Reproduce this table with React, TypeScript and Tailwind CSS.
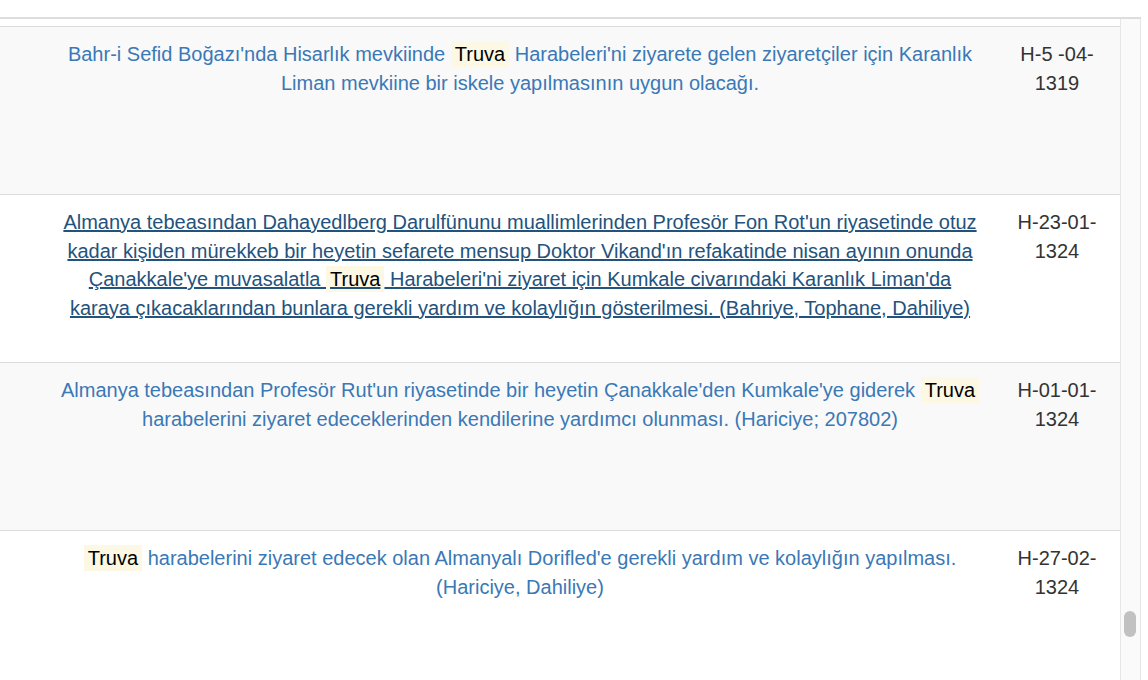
import React from 'react';

// 一行分のテキスト（Truva 部分はハイライト）
type Segment = { text: string; mark?: boolean };

interface ResultRow {
  lines: Segment[][];
  date: [string, string];
  visited?: boolean;
}

const rows: ResultRow[] = [
  {
    lines: [
      [
        { text: "Bahr-i Sefid Boğazı'nda Hisarlık mevkiinde " },
        { text: 'Truva', mark: true },
        { text: " Harabeleri'ni ziyarete gelen ziyaretçiler için Karanlık" },
      ],
      [{ text: 'Liman mevkiine bir iskele yapılmasının uygun olacağı.' }],
    ],
    date: ['H-5 -04-', '1319'],
  },
  {
    visited: true,
    lines: [
      [
        {
          text: "Almanya tebeasından Dahayedlberg Darulfünunu muallimlerinden Profesör Fon Rot'un riyasetinde otuz",
        },
      ],
      [
        {
          text: "kadar kişiden mürekkeb bir heyetin sefarete mensup Doktor Vikand'ın refakatinde nisan ayının onunda",
        },
      ],
      [
        { text: "Çanakkale'ye muvasalatla " },
        { text: 'Truva', mark: true },
        { text: " Harabeleri'ni ziyaret için Kumkale civarındaki Karanlık Liman'da" },
      ],
      [
        {
          text: 'karaya çıkacaklarından bunlara gerekli yardım ve kolaylığın gösterilmesi. (Bahriye, Tophane, Dahiliye)',
        },
      ],
    ],
    date: ['H-23-01-', '1324'],
  },
  {
    lines: [
      [
        {
          text: "Almanya tebeasından Profesör Rut'un riyasetinde bir heyetin Çanakkale'den Kumkale'ye giderek ",
        },
        { text: 'Truva', mark: true },
      ],
      [
        {
          text: 'harabelerini ziyaret edeceklerinden kendilerine yardımcı olunması. (Hariciye; 207802)',
        },
      ],
    ],
    date: ['H-01-01-', '1324'],
  },
  {
    lines: [
      [
        { text: 'Truva', mark: true },
        {
          text: " harabelerini ziyaret edecek olan Almanyalı Dorifled'e gerekli yardım ve kolaylığın yapılması.",
        },
      ],
      [{ text: '(Hariciye, Dahiliye)' }],
    ],
    date: ['H-27-02-', '1324'],
  },
];

export default function App() {
  return (
    <div className="h-[680px] w-[1148px] overflow-hidden bg-white pt-[17px] font-['Liberation_Sans',Arial,sans-serif] text-[20px] leading-[28.57px]">
      <div className="flex h-[663px] w-[1141px] border-t-2 border-[#dddddd]">
        {/* テーブル エリア */}
        <div className="flex-1 pt-[7px]">
          {rows.map((row, index) => (
            <div
              key={index}
              className={`${
                index % 2 === 0 ? 'bg-[#f9f9f9]' : 'bg-white'
              } flex h-[168px] border-t border-[#dddddd]`}
            >
              <div className="w-[994px] whitespace-nowrap pt-[13px] pr-[11px] pl-[57px] text-center">
                <a
                  href="#"
                  className={
                    row.visited ? 'text-[#23527c] underline' : 'text-[#3a78b6] no-underline'
                  }
                >
                  {row.lines.map((line, li) => (
                    <React.Fragment key={li}>
                      {li > 0 && <br />}
                      {line.map((seg, si) =>
                        seg.mark ? (
                          <mark key={si} className="bg-[#fcf8e3] px-[4px] py-[2px] text-black">
                            {seg.text}
                          </mark>
                        ) : (
                          <span key={si}>{seg.text}</span>
                        ),
                      )}
                    </React.Fragment>
                  ))}
                </a>
              </div>
              <div className="flex-1 pt-[13px] pr-[11px] pl-[11px] text-center text-[#333333]">
                {row.date[0]}
                <br />
                {row.date[1]}
              </div>
            </div>
          ))}
        </div>

        {/* スクロールバー */}
        <div className="w-[21px] border-x border-[#e6e6e6] bg-[#fafafa] pt-[592px] pl-[3px]">
          <div className="h-[26px] w-[12px] rounded-full bg-[#c1c1c1]" />
        </div>
      </div>
    </div>
  );
}
